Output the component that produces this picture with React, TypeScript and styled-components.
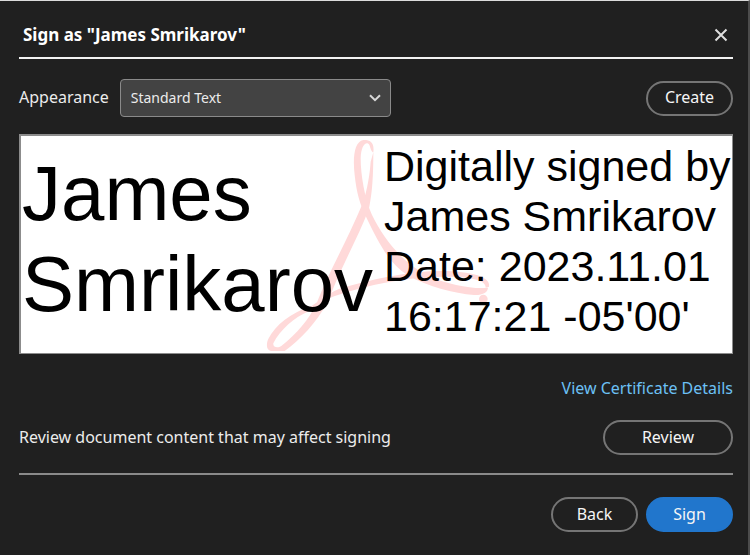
import React, { useState } from "react";
import styled, { createGlobalStyle } from "styled-components";

const GlobalStyle = createGlobalStyle`
  * { box-sizing: border-box; }
  body { margin: 0; background: #202020; }
  button, select { font: inherit; color: inherit; }
`;

const Dialog = styled.main`
  min-height: 100vh;
  display: flex;
  flex-direction: column;
  padding: 18px 15px 24px 19px;
  border-top: 1px solid #dcdcdc;
  border-right: 2px solid #4c4c4c;
  background: #202020;
  color: #ececec;
  font: 16px/24px "Noto Sans", "Open Sans", sans-serif;
`;

const Header = styled.header`
  display: flex;
  align-items: center;
  justify-content: space-between;
  height: 40px;
  padding: 0 3px 7px 4px;
  border-bottom: 2px solid #f2f2f2;
`;

const Title = styled.h1`
  margin: 0;
  font-size: 17px;
  line-height: 24px;
  font-weight: 700;
  color: #ffffff;
`;

const CloseButton = styled.button`
  display: flex;
  padding: 2px;
  border: 0;
  background: none;
  cursor: pointer;
`;

const Row = styled.div`
  display: flex;
  align-items: center;
  justify-content: space-between;
  gap: 10px;
`;

const AppearanceRow = styled(Row)`
  margin-top: 20px;
`;

const Field = styled.div`
  display: flex;
  align-items: center;
  gap: 11px;
`;

const FieldLabel = styled.label`
  padding-bottom: 2px;
`;

const SelectWrap = styled.div`
  display: grid;
  align-items: center;
  width: 271px;

  > * { grid-area: 1 / 1; }
  > svg { justify-self: end; margin-right: 10px; pointer-events: none; }
`;

const Select = styled.select`
  appearance: none;
  width: 100%;
  height: 38px;
  padding: 0 32px 0 10px;
  border: 1px solid #8a8a8a;
  border-radius: 4px;
  background: #434343;
  font-size: 14px;
`;

const PillButton = styled.button<{ $primary?: boolean; $wide?: boolean }>`
  width: ${(p) => (p.$wide ? 130 : 87)}px;
  height: 35px;
  padding: 0 0 2px;
  border: 2px solid ${(p) => (p.$primary ? "#2176cc" : "#757575")};
  border-radius: 18px;
  background: ${(p) => (p.$primary ? "#2176cc" : "transparent")};
  color: #f5f5f5;
  cursor: pointer;
`;

const Preview = styled.section`
  position: relative;
  display: grid;
  grid-template-columns: 363fr 348fr;
  align-items: center;
  height: 220px;
  margin-top: 17px;
  border: 2px solid #8c8c8c;
  border-right-width: 1px;
  border-bottom-width: 1px;
  background: #ffffff;
  color: #000000;
  font-family: "Liberation Sans", Arial, sans-serif;
`;

const Watermark = styled.svg`
  position: absolute;
  inset: 0;
  margin: auto;
  width: 230px;
  height: 217px;
`;

const SignerName = styled.p`
  position: relative;
  margin: 0;
  padding: 0 0 12px 1px;
  font-size: 78px;
  line-height: 91px;
`;

const SignatureInfo = styled.p`
  position: relative;
  margin: 0;
  padding-bottom: 8px;
  font-size: 43px;
  line-height: 50px;
  white-space: nowrap;
`;

const LinkRow = styled.div`
  display: flex;
  justify-content: flex-end;
  margin-top: 22px;
`;

const DetailsLink = styled.a`
  color: #6cc0f5;
  text-decoration: none;
`;

const ReviewRow = styled(Row)`
  margin-top: 20px;
`;

const ReviewNote = styled.span`
  padding-bottom: 2px;
`;

const Divider = styled.hr`
  width: 100%;
  height: 2px;
  margin: 18px 0 22px;
  border: 0;
  background: #8a8a8a;
`;

const Footer = styled.footer`
  display: flex;
  justify-content: flex-end;
  gap: 8px;
`;

export default function App() {
  const [appearance, setAppearance] = useState("Standard Text");
  return (
    <>
      <GlobalStyle />
      <Dialog>
        <Header>
          <Title>Sign as "James Smrikarov"</Title>
          <CloseButton aria-label="Close">
            <svg width="14" height="14" viewBox="0 0 14 14" fill="none" stroke="#dedede" strokeWidth="2">
              <path d="M1.5 1.5l11 11M12.5 1.5l-11 11" />
            </svg>
          </CloseButton>
        </Header>
        <AppearanceRow>
          <Field>
            <FieldLabel htmlFor="appearance">Appearance</FieldLabel>
            <SelectWrap>
              <Select id="appearance" value={appearance} onChange={(e) => setAppearance(e.target.value)}>
                <option>Standard Text</option>
              </Select>
              <svg width="12" height="8" viewBox="0 0 12 8" fill="none" stroke="#d8d8d8" strokeWidth="2">
                <path d="M1 1.2l5 5 5-5" />
              </svg>
            </SelectWrap>
          </Field>
          <PillButton>Create</PillButton>
        </AppearanceRow>
        <Preview aria-label="Signature preview">
          <Watermark viewBox="64 33 690 651" fill="#ffd9d9" aria-hidden="true">
            <path d="M398 82C402 52 388 44 368 45C340 50 336 100 342 150C347 200 358 240 376 275C415 355 445 415 500 450C560 485 640 505 700 510C728 511 741 501 742 488C700 494 625 478 565 455C485 412 430 345 393 268C372 220 360 150 360 100C361 70 370 54 380 55C390 57 386 72 396 82Z" />
            <path d="M398 82C398 150 395 205 385 250C355 335 300 425 262 530C225 595 180 643 132 678H92C76 676 76 655 84 640C104 600 150 563 214 542L206 558C160 577 118 615 98 655C96 668 112 670 122 663C170 625 204 585 228 535C258 455 320 345 364 240C381 195 388 140 390 110Z" />
            <path d="M214 542C250 520 272 500 300 490C400 460 520 435 620 438C690 441 751 454 745 485L735 488C737 465 690 456 620 455C510 454 385 477 285 512C255 522 235 540 206 558Z" />
            <circle cx="728" cy="522" r="13" />
          </Watermark>
          <SignerName>James<br />Smrikarov</SignerName>
          <SignatureInfo>
            Digitally signed by<br />James Smrikarov<br />Date: 2023.11.01<br />16:17:21 -05'00'
          </SignatureInfo>
        </Preview>
        <LinkRow>
          <DetailsLink href="#certificate">View Certificate Details</DetailsLink>
        </LinkRow>
        <ReviewRow>
          <ReviewNote>Review document content that may affect signing</ReviewNote>
          <PillButton $wide>Review</PillButton>
        </ReviewRow>
        <Divider />
        <Footer>
          <PillButton>Back</PillButton>
          <PillButton $primary>Sign</PillButton>
        </Footer>
      </Dialog>
    </>
  );
}
